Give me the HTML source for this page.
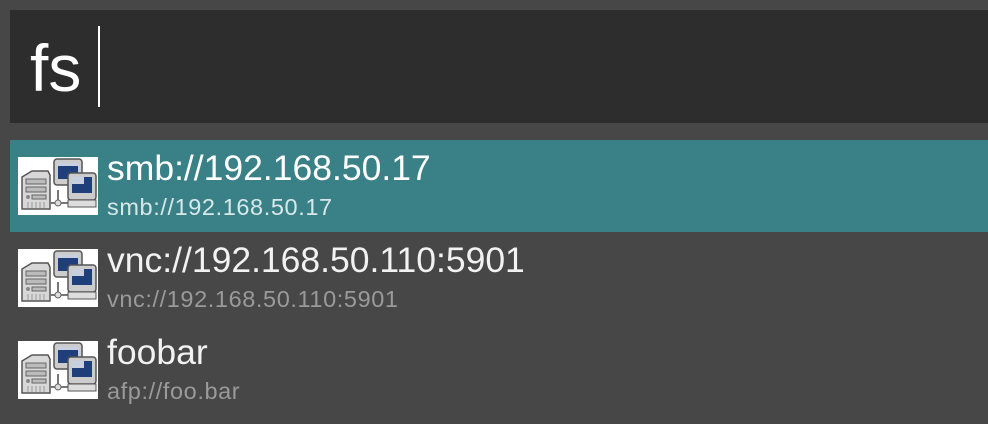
<!DOCTYPE html>
<html><head><style>
body{margin:0;width:988px;height:424px;overflow:hidden;background:#474747;font-family:"Liberation Sans",sans-serif;position:relative}
.search{position:absolute;left:10px;top:10px;width:978px;height:113px;background:#2d2d2d}
.fs{position:absolute;left:20px;top:18px;font-size:66px;color:#fff;line-height:80px}
.cur{position:absolute;left:88px;top:16px;width:2px;height:81px;background:#fff}
.row{position:absolute;left:10px;width:978px;height:92px}
.sel{background:#3a8187}
.icon{position:absolute;left:8px;top:17px;width:80px;height:58px}
.t{position:absolute;left:97px;top:8px;font-size:35.5px;color:#f2f2f2;white-space:nowrap;line-height:40px}
.s{position:absolute;left:97px;top:53px;font-size:23.5px;color:#9a9a9a;white-space:nowrap;line-height:28px;letter-spacing:.6px}
.sel .s{color:#d8e8ea}
.sel .t{color:#fff}
</style></head><body>
<div class="search"><div class="fs">fs</div><div class="cur"></div></div>
<svg width="0" height="0" style="position:absolute"><defs><g id="ic">
<rect width="80" height="58" fill="#fff"/>
<path d="M4 20 L14 14 L30 14 L32 18 L32 52 L4 52 Z" fill="#d8d8d8" stroke="#555" stroke-width="1.5"/>
<rect x="8" y="22" width="20" height="5" fill="#bbb" stroke="#666"/>
<rect x="8" y="30" width="20" height="5" fill="#bbb" stroke="#666"/>
<circle cx="10" cy="40" r="2" fill="#888"/>
<rect x="14" y="38" width="14" height="4" fill="#bbb" stroke="#666"/>
<path d="M10 45v6M14 45v6M18 45v6M22 45v6M26 45v6" stroke="#999"/>
<path d="M32 46 H50 M40 33 V46" stroke="#777" stroke-width="2"/>
<circle cx="40" cy="46" r="3" fill="#ddd" stroke="#666"/>
<rect x="36" y="2" width="28" height="26" rx="3" fill="#ccc" stroke="#555" stroke-width="1.5"/>
<rect x="40" y="6" width="20" height="16" fill="#1f3f7a"/>
<rect x="40" y="6" width="20" height="3" fill="#c8d0e0"/>
<rect x="50" y="16" width="28" height="27" rx="3" fill="#ccc" stroke="#555" stroke-width="1.5"/>
<rect x="54" y="20" width="20" height="16" fill="#1f3f7a"/>
<rect x="54" y="20" width="12" height="7" fill="#c8d0e0"/>
<rect x="50" y="43" width="28" height="7" fill="#ddd" stroke="#555"/>
</g></defs></svg>
<div class="row sel" style="top:140px"><svg class="icon"><use href="#ic"/></svg><div class="t">smb://192.168.50.17</div><div class="s">smb://192.168.50.17</div></div>
<div class="row" style="top:232px"><svg class="icon"><use href="#ic"/></svg><div class="t">vnc://192.168.50.110:5901</div><div class="s">vnc://192.168.50.110:5901</div></div>
<div class="row" style="top:324px"><svg class="icon"><use href="#ic"/></svg><div class="t">foobar</div><div class="s">afp://foo.bar</div></div>
</body></html>
